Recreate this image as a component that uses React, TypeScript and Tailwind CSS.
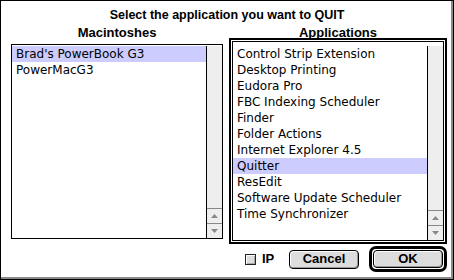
import React from "react";

const macs = ["Brad's PowerBook G3", "PowerMacG3"];
const apps = [
  "Control Strip Extension",
  "Desktop Printing",
  "Eudora Pro",
  "FBC Indexing Scheduler",
  "Finder",
  "Folder Actions",
  "Internet Explorer 4.5",
  "Quitter",
  "ResEdit",
  "Software Update Scheduler",
  "Time Synchronizer",
];

function ScrollBar() {
  return (
    <div className="w-[16px] h-full border-l border-black bg-[#eeeeee] flex flex-col justify-end">
      <div className="h-[15px] border-t border-[#888888] flex items-center justify-center">
        <svg width="7" height="4" viewBox="0 0 7 4">
          <polygon points="3.5,0 7,4 0,4" fill="#888888" />
        </svg>
      </div>
      <div className="h-[15px] border-t border-[#888888] flex items-center justify-center">
        <svg width="7" height="4" viewBox="0 0 7 4">
          <polygon points="0,0 7,0 3.5,4" fill="#888888" />
        </svg>
      </div>
    </div>
  );
}

function List({ items, selected }: { items: string[]; selected: number }) {
  return (
    <div className="flex h-full">
      <div className="flex-1 flex flex-col">
        {items.map((t, i) => (
          <div
            key={t}
            className={
              "h-[16px] leading-[16px] pl-[4px] whitespace-nowrap " +
              (i === selected ? "bg-[#ccccff]" : "")
            }
          >
            {t}
          </div>
        ))}
      </div>
      <ScrollBar />
    </div>
  );
}

export default function App() {
  return (
    <div className="w-[454px] h-[280px] border border-black bg-white text-black shadow-[inset_-2px_-2px_0_#8a8a8a] font-['Liberation_Sans',sans-serif] overflow-hidden">
      <div className="mt-[6px] h-[16px] leading-[16px] text-center text-[12.5px] font-bold">
        Select the application you want to QUIT
      </div>
      <div className="flex mt-[2px] h-[13px] leading-[16px] text-[13px] font-bold">
        <div className="ml-[10px] w-[212px] text-center">Macintoshes</div>
        <div className="ml-[6px] w-[218px] text-center">Applications</div>
      </div>
      <div className="flex items-start font-['DejaVu_Sans',sans-serif] text-[12px]">
        <div className="ml-[10px] mt-[6px] w-[212px] h-[195px] border border-black pt-[1px]">
          <List items={macs} selected={0} />
        </div>
        <div className="ml-[6px] w-[218px] h-[206px] border-2 border-black p-[1px]">
          <div className="w-full h-full border border-black pt-[4px]">
            <List items={apps} selected={7} />
          </div>
        </div>
      </div>
      <div className="flex items-center mt-[1px] h-[28px] text-[13px] font-bold">
        <div className="ml-[244px] w-[44px] flex items-center gap-[6px]">
          <div className="w-[11px] h-[11px] border border-[#222222] bg-[#dddddd] shadow-[inset_1px_1px_0_#ffffff,inset_-1px_-1px_0_#aaaaaa]" />
          <span className="leading-[14px]">IP</span>
        </div>
        <div className="w-[70px] h-[19px] border border-black rounded-[4px] bg-[#dddddd] shadow-[inset_1px_1px_0_#ffffff,inset_-1px_-1px_0_#999999] flex items-center justify-center leading-[14px]">
          Cancel
        </div>
        <div className="ml-[10px] w-[78px] h-[26px] border-[3px] border-black rounded-[7px] p-[1px]">
          <div className="w-full h-full border border-black rounded-[4px] bg-[#dddddd] shadow-[inset_1px_1px_0_#ffffff,inset_-1px_-1px_0_#999999] flex items-center justify-center leading-[14px]">
            OK
          </div>
        </div>
      </div>
    </div>
  );
}
